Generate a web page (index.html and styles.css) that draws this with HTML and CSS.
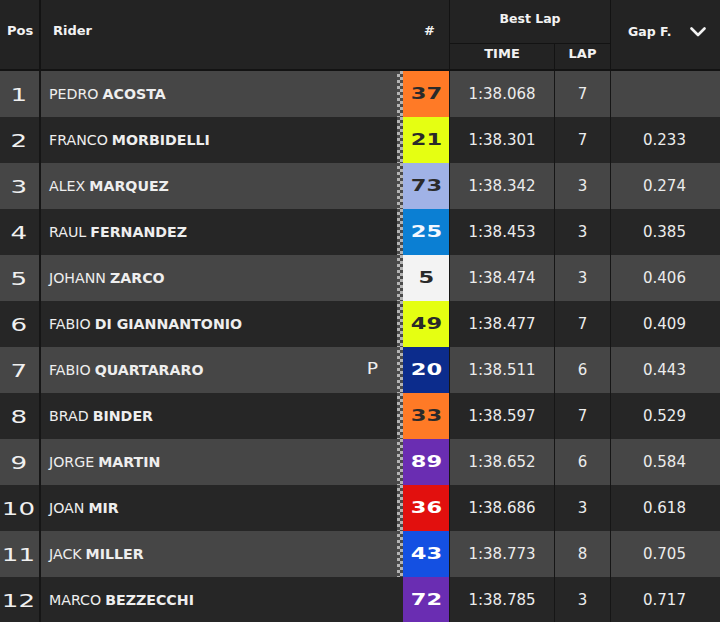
FILE: index.html
```html
<!DOCTYPE html>
<html>
<head>
<meta charset="utf-8">
<link rel="stylesheet" href="styles.css">
</head>
<body>
<div class="board">
  <div class="head">
    <div class="h-pos">Pos</div>
    <div class="h-rider">Rider</div>
    <div class="h-num">#</div>
    <div class="h-best">
      <div class="h-best-title">Best Lap</div>
      <div class="h-best-sub">
        <div class="h-time">TIME</div>
        <div class="h-lap">LAP</div>
      </div>
    </div>
    <div class="h-gap"><span>Gap F.</span>
      <svg class="chev" width="16" height="10" viewBox="0 0 16 10"><path d="M1.5 1.5 L8 8 L14.5 1.5" fill="none" stroke="#f2f2f2" stroke-width="2.6" stroke-linecap="round" stroke-linejoin="round"/></svg>
    </div>
  </div>

  <div class="row light">
    <div class="pos"><span class="wide">1</span></div>
    <div class="rider">PEDRO <b>ACOSTA</b></div>
    <div class="flag"></div>
    <div class="num c-orange"><span class="wide">37</span></div>
    <div class="time">1:38.068</div>
    <div class="lap">7</div>
    <div class="gap"></div>
  </div>
  <div class="row dark">
    <div class="pos"><span class="wide">2</span></div>
    <div class="rider">FRANCO <b>MORBIDELLI</b></div>
    <div class="flag"></div>
    <div class="num c-yellow"><span class="wide">21</span></div>
    <div class="time">1:38.301</div>
    <div class="lap">7</div>
    <div class="gap">0.233</div>
  </div>
  <div class="row light">
    <div class="pos"><span class="wide">3</span></div>
    <div class="rider">ALEX <b>MARQUEZ</b></div>
    <div class="flag"></div>
    <div class="num c-lavender"><span class="wide">73</span></div>
    <div class="time">1:38.342</div>
    <div class="lap">3</div>
    <div class="gap">0.274</div>
  </div>
  <div class="row dark">
    <div class="pos"><span class="wide">4</span></div>
    <div class="rider">RAUL <b>FERNANDEZ</b></div>
    <div class="flag"></div>
    <div class="num c-sky"><span class="wide">25</span></div>
    <div class="time">1:38.453</div>
    <div class="lap">3</div>
    <div class="gap">0.385</div>
  </div>
  <div class="row light">
    <div class="pos"><span class="wide">5</span></div>
    <div class="rider">JOHANN <b>ZARCO</b></div>
    <div class="flag"></div>
    <div class="num c-white"><span class="wide">5</span></div>
    <div class="time">1:38.474</div>
    <div class="lap">3</div>
    <div class="gap">0.406</div>
  </div>
  <div class="row dark">
    <div class="pos"><span class="wide">6</span></div>
    <div class="rider">FABIO <b>DI GIANNANTONIO</b></div>
    <div class="flag"></div>
    <div class="num c-yellow"><span class="wide">49</span></div>
    <div class="time">1:38.477</div>
    <div class="lap">7</div>
    <div class="gap">0.409</div>
  </div>
  <div class="row light">
    <div class="pos"><span class="wide">7</span></div>
    <div class="rider">FABIO <b>QUARTARARO</b><span class="pit wide">P</span></div>
    <div class="flag"></div>
    <div class="num c-navy"><span class="wide">20</span></div>
    <div class="time">1:38.511</div>
    <div class="lap">6</div>
    <div class="gap">0.443</div>
  </div>
  <div class="row dark">
    <div class="pos"><span class="wide">8</span></div>
    <div class="rider">BRAD <b>BINDER</b></div>
    <div class="flag"></div>
    <div class="num c-orange"><span class="wide">33</span></div>
    <div class="time">1:38.597</div>
    <div class="lap">7</div>
    <div class="gap">0.529</div>
  </div>
  <div class="row light">
    <div class="pos"><span class="wide">9</span></div>
    <div class="rider">JORGE <b>MARTIN</b></div>
    <div class="flag"></div>
    <div class="num c-purple"><span class="wide">89</span></div>
    <div class="time">1:38.652</div>
    <div class="lap">6</div>
    <div class="gap">0.584</div>
  </div>
  <div class="row dark">
    <div class="pos"><span class="wide">10</span></div>
    <div class="rider">JOAN <b>MIR</b></div>
    <div class="flag"></div>
    <div class="num c-red"><span class="wide">36</span></div>
    <div class="time">1:38.686</div>
    <div class="lap">3</div>
    <div class="gap">0.618</div>
  </div>
  <div class="row light">
    <div class="pos"><span class="wide">11</span></div>
    <div class="rider">JACK <b>MILLER</b></div>
    <div class="flag"></div>
    <div class="num c-blue"><span class="wide">43</span></div>
    <div class="time">1:38.773</div>
    <div class="lap">8</div>
    <div class="gap">0.705</div>
  </div>
  <div class="row dark">
    <div class="pos"><span class="wide">12</span></div>
    <div class="rider">MARCO <b>BEZZECCHI</b></div>
    <div class="flag none"></div>
    <div class="num c-purple"><span class="wide">72</span></div>
    <div class="time">1:38.785</div>
    <div class="lap">3</div>
    <div class="gap">0.717</div>
  </div>
</div>
</body>
</html>
```

FILE: styles.css
```css
* { box-sizing: border-box; }
html, body { margin: 0; padding: 0; }
body {
  background: #232323;
  color: #eeeeee;
  font-family: "DejaVu Sans", "Liberation Sans", sans-serif;
  width: 720px;
  height: 622px;
  overflow: hidden;
}
.board { width: 720px; }

.head {
  display: grid;
  grid-template-columns: 41px 362px 46px 162px 1fr;
  height: 71px;
  background: #232323;
  border-bottom: 2px solid #131313;
  font-weight: bold;
  font-size: 13px;
  color: #f2f2f2;
}
.h-pos {
  border-right: 2px solid #131313;
  padding: 23px 0 0 7px;
}
.h-rider { padding: 23px 0 0 12px; }
.h-num { padding: 23px 14px 0 0; text-align: right; }
.h-best {
  border-left: 1px solid #131313;
  border-right: 1px solid #131313;
  display: flex;
  flex-direction: column;
}
.h-best-title {
  height: 44px;
  border-bottom: 1px solid #131313;
  text-align: center;
  padding-top: 11px;
  font-size: 12.5px;
}
.h-best-sub { display: flex; flex: 1; }
.h-time {
  width: 105px;
  border-right: 1px solid #131313;
  text-align: center;
  padding-top: 2px;
}
.h-lap { flex: 1; text-align: center; padding-top: 2px; }
.h-gap {
  display: flex;
  align-items: flex-start;
  padding: 24px 0 0 17px;
  font-size: 12.5px;
}
.chev { margin: 3px 0 0 19px; }

.row {
  display: grid;
  grid-template-columns: 41px 356px 6px 46px 106px 56px 1fr;
  height: 46px;
  align-items: center;
}
.row > div { height: 100%; display: flex; align-items: center; }
.row.light { background: #464646; }
.row.dark { background: #262626; }

.wide { display: inline-block; transform: scaleX(1.45); }

.pos {
  border-right: 2px solid #161616;
  justify-content: center;
  padding-right: 2px;
  font-size: 18px;
  color: #f0f0f0;
}
.rider {
  padding-left: 8px;
  font-size: 14.2px;
  color: #eeeeee;
  position: relative;
}
.rider b { margin-left: 4px; }
.pit {
  position: absolute;
  left: 327px;
  top: 13px;
  font-size: 15px;
  font-weight: normal;
  transform: scaleX(1.25);
}
.flag {
  background: repeating-conic-gradient(#b4b4b4 0 25%, #4a4a4a 0 50%) 0 0 / 6px 6px;
}
.flag.none { background: none; }
.num {
  justify-content: center;
  font-size: 15px;
  font-weight: bold;
  color: #2a2a2a;
}
.num .wide { transform: scaleX(1.5); }
.c-orange { background: #ff7a26; }
.c-yellow { background: #e5ff12; }
.c-lavender { background: #a0b2e6; }
.c-sky { background: #0b7fd3; color: #f4f8ff; }
.c-white { background: #f3f3f3; }
.c-navy { background: #0c2c8c; color: #ffffff; }
.c-purple { background: #6a2db2; color: #ffffff; }
.c-red { background: #e2100e; color: #ffffff; }
.c-blue { background: #1450e2; color: #ffffff; }

.time {
  border-left: 1px solid #161616;
  border-right: 1px solid #161616;
  justify-content: center;
  font-size: 15px;
  color: #ececec;
}
.lap {
  border-right: 1px solid #161616;
  justify-content: center;
  font-size: 15px;
  color: #ececec;
}
.gap {
  justify-content: center;
  font-size: 15px;
  color: #ececec;
  padding-right: 2px;
}
```
